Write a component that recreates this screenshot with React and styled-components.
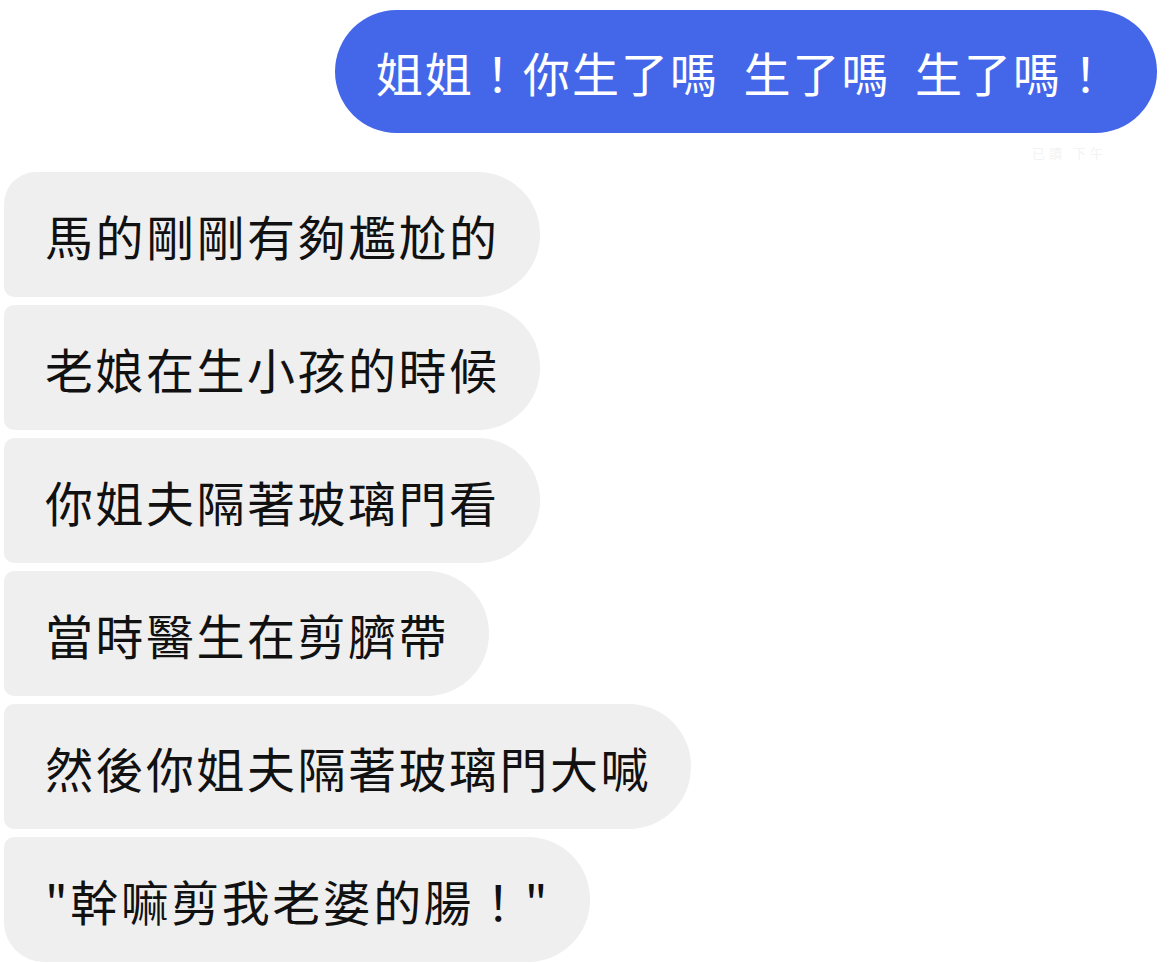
import React from 'react'
import styled, { createGlobalStyle } from 'styled-components'

const GlobalStyle = createGlobalStyle`
  html, body {
    margin: 0;
    padding: 0;
    background: #ffffff;
  }
  body {
    font-family: "Noto Sans CJK TC", "Noto Sans", sans-serif;
  }
`

const ChatLayout = styled.div`
  width: 1170px;
  height: 963px;
  overflow: hidden;
  display: flex;
  flex-direction: column;
  padding: 10px 13px 0 4px;
  box-sizing: border-box;
`

const OutgoingRow = styled.div`
  display: flex;
  justify-content: flex-end;
`

const OutgoingBubble = styled.div`
  background: #4467ea;
  color: #ffffff;
  height: 123px;
  width: 822px;
  box-sizing: border-box;
  padding-left: 41px;
  display: flex;
  align-items: center;
  border-radius: 62px;
  font-size: 47px;
  letter-spacing: 2px;
  word-spacing: 12px;
  white-space: pre;
`

const SeenRow = styled.div`
  height: 39px;
  display: flex;
  justify-content: flex-end;
  align-items: center;
  padding-right: 50px;
  color: #f3f3f3;
  font-size: 13px;
  letter-spacing: 4px;
`

const IncomingList = styled.div`
  display: flex;
  flex-direction: column;
  align-items: flex-start;
  gap: 8px;
`

const IncomingBubble = styled.div`
  background: #efefef;
  color: #111111;
  height: 125px;
  box-sizing: border-box;
  padding: 0 40px 0 41px;
  display: flex;
  align-items: center;
  font-size: 48px;
  letter-spacing: 2.5px;
  white-space: nowrap;
  border-radius: ${props =>
    props.position === 'first'
      ? '32px 62px 62px 10px'
      : props.position === 'last'
      ? '10px 62px 62px 40px'
      : '10px 62px 62px 10px'};
`

const messages = [
  '馬的剛剛有夠尷尬的',
  '老娘在生小孩的時候',
  '你姐夫隔著玻璃門看',
  '當時醫生在剪臍帶',
  '然後你姐夫隔著玻璃門大喊',
  '"幹嘛剪我老婆的腸！"',
]

function App() {
  return (
    <ChatLayout>
      <GlobalStyle />
      <OutgoingRow>
        <OutgoingBubble>姐姐！你生了嗎 生了嗎 生了嗎！</OutgoingBubble>
      </OutgoingRow>
      <SeenRow>已讀 下午</SeenRow>
      <IncomingList>
        {messages.map((text, i) => (
          <IncomingBubble
            key={i}
            position={i === 0 ? 'first' : i === messages.length - 1 ? 'last' : 'middle'}
          >
            {text}
          </IncomingBubble>
        ))}
      </IncomingList>
    </ChatLayout>
  )
}

export default App
